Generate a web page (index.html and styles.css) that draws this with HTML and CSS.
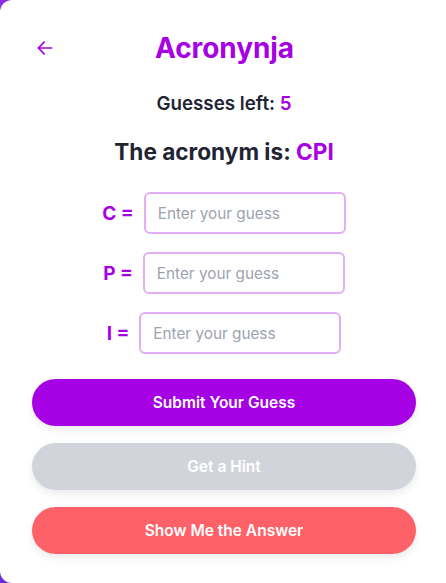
FILE: index.html
```html
<!DOCTYPE html>
<html lang="en">
<head>
  <meta charset="UTF-8" />
  <meta name="viewport" content="width=device-width, initial-scale=1.0" />
  <title>Acronynja</title>
  <link rel="stylesheet" href="styles.css">
</head>
<body>
  <div class="card">
    <div class="header">
      <button class="back" aria-label="Back">
        <svg width="20" height="20" viewBox="0 0 24 24" fill="none" stroke="currentColor" stroke-width="2" stroke-linecap="round" stroke-linejoin="round">
          <path d="M20 12H4"/>
          <path d="M11 5l-7 7 7 7"/>
        </svg>
      </button>
      <h1 class="title">Acronynja</h1>
      <span class="spacer"></span>
    </div>
    <p class="guesses">Guesses left: <span class="accent">5</span></p>
    <h2 class="acronym">The acronym is: <span class="accent">CPI</span></h2>
    <div class="fields">
      <label class="field"><span class="letter">C =</span><input type="text" placeholder="Enter your guess"></label>
      <label class="field"><span class="letter">P =</span><input type="text" placeholder="Enter your guess"></label>
      <label class="field"><span class="letter">I =</span><input type="text" placeholder="Enter your guess"></label>
    </div>
    <div class="actions">
      <button class="btn submit">Submit Your Guess</button>
      <button class="btn hint" disabled>Get a Hint</button>
      <button class="btn answer">Show Me the Answer</button>
    </div>
  </div>
</body>
</html>
```

FILE: styles.css
```css
:root {
  --purple: #a600e4;
  --text-dark: #1f2433;
  --field-border: #e2aef4;
  --hint-bg: #d1d5db;
  --answer-bg: #ff6168;
}
body {
  margin: 0;
  padding: 0;
  font-family: Inter, "Noto Sans", sans-serif;
  background: linear-gradient(160deg, #8a2be2, #5b2bd6);
  height: 100vh;
  overflow: hidden;
}
.card {
  background: white;
  height: 100vh;
  box-sizing: border-box;
  padding: 28px 30px 0 32px;
  border-radius: 12px 0 0 12px;
}
.header {
  display: flex;
  align-items: center;
  justify-content: space-between;
  height: 40px;
}
.back {
  width: 24px;
  height: 24px;
  padding: 0;
  border: none;
  background: none;
  color: var(--purple);
  display: flex;
  align-items: center;
  justify-content: center;
  margin-left: 1px;
}
.spacer {
  width: 24px;
}
.title {
  margin: 0;
  font-size: 28px;
  font-weight: 700;
  color: var(--purple);
  letter-spacing: -0.1px;
}
.guesses {
  margin: 24px 0 0;
  text-align: center;
  font-size: 18.8px;
  font-weight: 600;
  color: var(--text-dark);
  line-height: 24px;
}
.acronym {
  margin: 22px 0 0;
  text-align: center;
  font-size: 22.6px;
  font-weight: 700;
  color: var(--text-dark);
  line-height: 28px;
}
.accent {
  color: var(--purple);
}
.fields {
  margin-top: 26px;
  display: flex;
  flex-direction: column;
  align-items: center;
  gap: 18px;
}
.field {
  display: flex;
  align-items: center;
  gap: 10px;
}
.letter {
  font-size: 19px;
  font-weight: 700;
  color: var(--purple);
}
.field input {
  width: 202px;
  height: 42px;
  box-sizing: border-box;
  border: 2px solid var(--field-border);
  border-radius: 6px;
  padding: 0 12px;
  font-family: Inter, "Noto Sans", sans-serif;
  font-size: 15.3px;
  color: var(--text-dark);
  outline: none;
}
.field input::placeholder {
  color: #9ca3af;
}
.actions {
  margin-top: 25px;
  display: flex;
  flex-direction: column;
  gap: 17px;
}
.btn {
  height: 47px;
  border: none;
  border-radius: 999px;
  font-family: Inter, "Noto Sans", sans-serif;
  font-size: 15.5px;
  font-weight: 600;
  color: white;
  box-shadow: 0 4px 8px rgba(0, 0, 0, 0.08);
}
.submit { background: var(--purple); }
.hint { background: var(--hint-bg); }
.answer { background: var(--answer-bg); }
```
